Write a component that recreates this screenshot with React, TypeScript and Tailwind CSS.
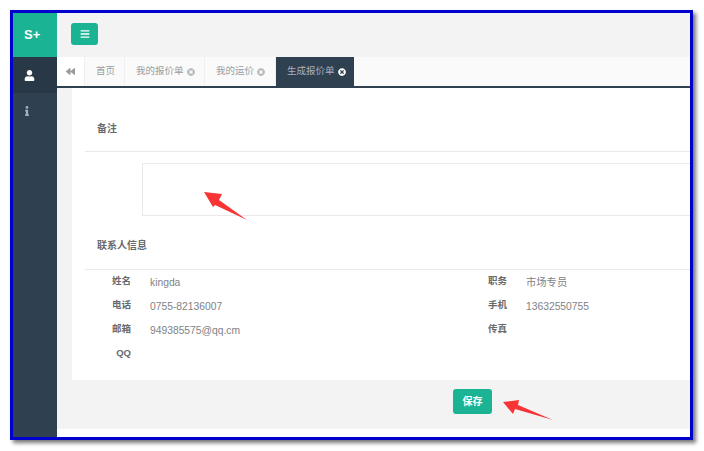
import { FaBackward, FaBars, FaInfo, FaTimesCircle, FaUser } from "react-icons/fa";

const font = "font-['Liberation_Sans','Noto_Sans_CJK_SC',sans-serif]";

function Tab({ label, closable, width }: { label: string; closable?: boolean; width: string }) {
  return (
    <div className={`${width} h-full flex items-center gap-[3px] pl-[11px] border-r border-[#f0f0f0] text-[9.5px] text-[#999c9e]`}>
      <span>{label}</span>
      {closable && <FaTimesCircle className="text-[8px] text-[#b4b8ba]" />}
    </div>
  );
}

function Field({ label, value, valueW }: { label: string; value?: string; valueW?: string }) {
  return (
    <div className={`flex items-center h-full ${valueW ?? ""}`}>
      <div className="w-[59px] pb-[1px] text-right font-bold text-[9.5px] text-[#676a6c]">{label}</div>
      <div className="ml-[19px] pt-[1px] text-[10.3px] text-[#808285]">{value}</div>
    </div>
  );
}

const rows: [string, string, string, string][] = [
  ["姓名", "kingda", "职务", "市场专员"],
  ["电话", "0755-82136007", "手机", "13632550755"],
  ["邮箱", "949385575@qq.cm", "传真", ""],
  ["QQ", "", "", ""],
];

export default function App() {
  return (
    <div className={`w-[704px] h-[451px] bg-white pl-[10px] pt-[10px] overflow-hidden ${font}`}>
      <div className="relative w-[683px] h-[430px] border-[3px] border-[#0000cd] shadow-[3px_3px_4px_#777] flex overflow-hidden bg-white">
        <aside className="w-[44px] shrink-0 bg-[#2f4050] flex flex-col">
          <div className="h-[44px] bg-[#1ab394] flex items-center pl-[11px] text-white font-bold text-[13px]">S+</div>
          <div className="h-[36px] bg-[#293846] flex items-center pl-[11px] text-white text-[11px]">
            <FaUser />
          </div>
          <div className="h-[36px] flex items-center pl-[9px] text-[#a7b1c2] text-[10px]">
            <FaInfo />
          </div>
        </aside>
        <main className="flex-1 min-w-0 flex flex-col bg-[#f3f3f4]">
          <div className="h-[44px] shrink-0 pl-[14px] pt-[10px]">
            <div className="w-[27px] h-[22px] rounded-[3px] bg-[#1ab394] flex items-center justify-center text-white text-[10px]">
              <FaBars />
            </div>
          </div>
          <div className="h-[31px] shrink-0 bg-[#fafafa] border-b-2 border-[#2f4050] flex items-stretch">
            <div className="w-[28px] bg-white border-r border-[#f0f0f0] flex items-center justify-center text-[#999c9e] text-[9px]">
              <FaBackward />
            </div>
            <Tab label="首页" width="w-[40px]" />
            <Tab label="我的报价单" closable width="w-[80px]" />
            <Tab label="我的运价" closable width="w-[71px]" />
            <div className="w-[78px] h-full flex items-center gap-[3px] pl-[11px] bg-[#2f4050] text-[9.5px] text-[#a7b1c2]">
              <span>生成报价单</span>
              <FaTimesCircle className="text-[8px] text-white" />
            </div>
          </div>
          <div className="ml-[15px] h-[292px] shrink-0 bg-white">
            <div className="h-[64px] ml-[13px] border-b border-[#e7eaec] flex items-center pl-[12px] pt-[18px] font-bold text-[10px] text-[#676a6c]">
              备注
            </div>
            <div className="ml-[70px] mt-[11px] h-[53px] bg-white border border-[#e8e9ea] border-r-0" />
            <div className="h-[54px] ml-[13px] border-b border-[#e7eaec] flex items-center pl-[12px] pt-[6px] font-bold text-[10px] text-[#676a6c]">
              联系人信息
            </div>
            <div>
              {rows.map((r) => (
                <div key={r[0]} className="h-[24px] flex">
                  <Field label={r[0]} value={r[1]} valueW="w-[376px]" />
                  <Field label={r[2]} value={r[3]} />
                </div>
              ))}
            </div>
          </div>
          <div className="h-[49px] shrink-0 pt-[9px] pl-[396px]">
            <div className="w-[39px] h-[25px] rounded-[3px] bg-[#1ab394] flex items-center justify-center text-white font-bold text-[10px]">
              保存
            </div>
          </div>
          <div className="flex-1 bg-white" />
        </main>
        <svg className="absolute left-[191px] top-[179px]" viewBox="0 0 44 30" width="44" height="30">
          <path d="M0 0 L18 2 L15 8 L43 28 L11 13 L9 15 Z" fill="#f93434" />
        </svg>
        <svg className="absolute left-[490px] top-[386px]" viewBox="0 0 51 22" width="51" height="22">
          <path d="M0 3 L16 1 L15 6 L50 21 L12 10 L10 15 Z" fill="#f93434" />
        </svg>
      </div>
    </div>
  );
}
